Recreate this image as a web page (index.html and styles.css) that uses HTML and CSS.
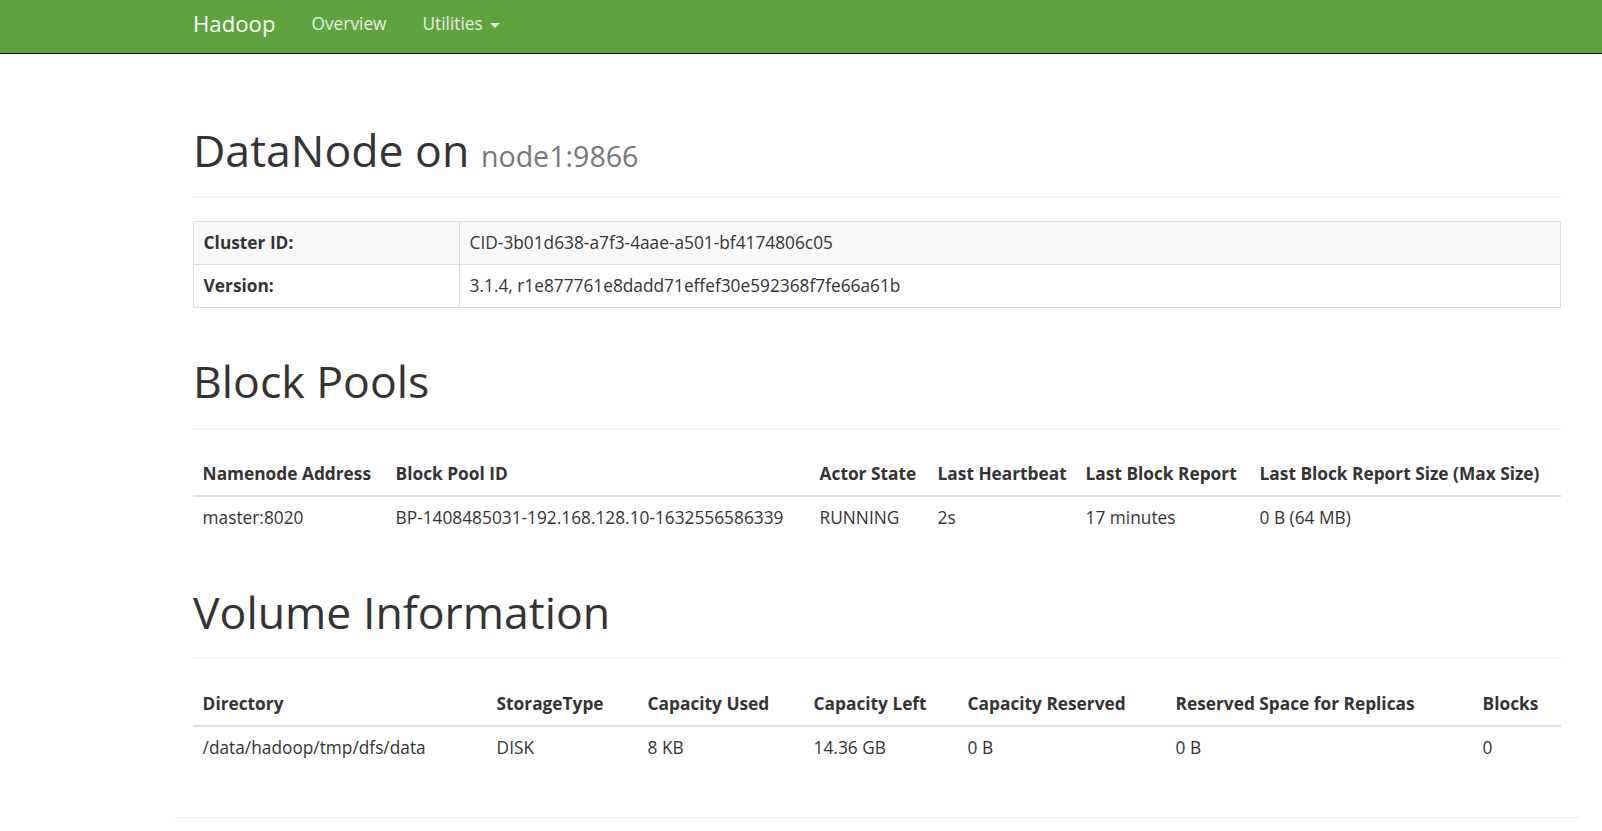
FILE: index.html
```html
<!DOCTYPE html>
<html>
<head>
<meta charset="utf-8">
<title>DataNode Information</title>
<link rel="stylesheet" href="styles.css">
</head>
<body>
<header class="navbar">
  <div class="navbar-inner">
    <div class="navbar-brand">Hadoop</div>
    <ul class="nav">
      <li><a href="#tab-overview">Overview</a></li>
      <li><a href="#">Utilities <b class="caret"></b></a></li>
    </ul>
  </div>
</header>

<main class="container">
  <div class="page-header first">
    <h1>DataNode on <small>node1:9866</small></h1>
  </div>
  <table class="table table-bordered info">
    <tbody>
      <tr class="striped"><th class="label-col">Cluster ID:</th><td>CID-3b01d638-a7f3-4aae-a501-bf4174806c05</td></tr>
      <tr><th class="label-col">Version:</th><td>3.1.4, r1e877761e8dadd71effef30e592368f7fe66a61b</td></tr>
    </tbody>
  </table>

  <div class="page-header">
    <h1>Block Pools</h1>
  </div>
  <table class="table">
    <thead>
      <tr>
        <th class="bp-1">Namenode Address</th>
        <th class="bp-2">Block Pool ID</th>
        <th class="bp-3">Actor State</th>
        <th class="bp-4">Last Heartbeat</th>
        <th class="bp-5">Last Block Report</th>
        <th class="bp-6">Last Block Report Size (Max Size)</th>
      </tr>
    </thead>
    <tbody>
      <tr>
        <td>master:8020</td>
        <td>BP-1408485031-192.168.128.10-1632556586339</td>
        <td>RUNNING</td>
        <td>2s</td>
        <td>17 minutes</td>
        <td>0 B (64 MB)</td>
      </tr>
    </tbody>
  </table>

  <div class="page-header">
    <h1>Volume Information</h1>
  </div>
  <table class="table">
    <thead>
      <tr>
        <th class="vi-1">Directory</th>
        <th class="vi-2">StorageType</th>
        <th class="vi-3">Capacity Used</th>
        <th class="vi-4">Capacity Left</th>
        <th class="vi-5">Capacity Reserved</th>
        <th class="vi-6">Reserved Space for Replicas</th>
        <th class="vi-7">Blocks</th>
      </tr>
    </thead>
    <tbody>
      <tr>
        <td>/data/hadoop/tmp/dfs/data</td>
        <td>DISK</td>
        <td>8 KB</td>
        <td>14.36 GB</td>
        <td>0 B</td>
        <td>0 B</td>
        <td>0</td>
      </tr>
    </tbody>
  </table>

  <div class="row">
    <hr class="footer-rule">
  </div>
</main>
</body>
</html>
```

FILE: styles.css
```css
* {
  box-sizing: border-box;
}

html, body {
  margin: 0;
  padding: 0;
  background: #fff;
}

body {
  font-family: "Open Sans", "Noto Sans", "Liberation Sans", sans-serif;
  font-size: 17.3px;
  line-height: 24px;
  color: #333;
}

/* Navbar */
.navbar {
  background-color: #5fa33e;
  height: 54px;
  border-bottom: 1px solid #080808;
}

.navbar-inner {
  width: 1404px;
  margin-left: 175px;
  padding: 0 18px;
  display: flex;
  align-items: flex-start;
  height: 53px;
}

.navbar-brand {
  margin-left: -18px;
  padding: 0 18px;
  font-size: 22.2px;
  line-height: 47px;
  color: #fff;
}

.nav {
  list-style: none;
  margin: 0;
  padding: 0;
  display: flex;
}

.nav a {
  display: block;
  padding: 0 18px;
  line-height: 47px;
  color: #e8ede6;
  text-decoration: none;
}

.caret {
  display: inline-block;
  width: 0;
  height: 0;
  margin-left: 3px;
  vertical-align: middle;
  border-top: 5px solid #e8ede6;
  border-left: 5px solid transparent;
  border-right: 5px solid transparent;
}

/* Main container */
.container {
  display: block;
  width: 1404px;
  margin-left: 175px;
  padding: 0 18px;
}

.page-header {
  margin: 49px 0 24px;
  padding-bottom: 22.8px;
  border-bottom: 1px solid #eee;
}

.page-header.first {
  margin-top: 72px;
}

.page-header h1 {
  margin: 0;
  font-size: 44.6px;
  font-weight: 400;
  line-height: 47.5px;
  color: #333;
}

.page-header h1 small {
  font-size: 28.6px;
  font-weight: 400;
  line-height: 1;
  color: #777;
}

/* Tables */
.table {
  width: 100%;
  border-collapse: collapse;
  border-spacing: 0;
  table-layout: fixed;
  margin: 0;
}

.table th,
.table td {
  padding: 9px 9.6px;
  line-height: 24px;
  text-align: left;
  vertical-align: top;
  white-space: nowrap;
}

.table th {
  font-weight: 700;
}

.table thead th {
  border-bottom: 2px solid #ddd;
  vertical-align: bottom;
}

.table tbody td {
  border-top: 1px solid #ddd;
}

.table-bordered {
  border: 1px solid #ddd;
}

.table-bordered th,
.table-bordered td {
  border: 1px solid #ddd;
}

.table-bordered tr.striped th,
.table-bordered tr.striped td {
  background-color: #f9f9f9;
}

.info .label-col {
  width: 266px;
}

.bp-1 { width: 193px; }
.bp-2 { width: 424px; }
.bp-3 { width: 118px; }
.bp-4 { width: 148px; }
.bp-5 { width: 174px; }
.bp-6 { width: 311px; }

.vi-1 { width: 294px; }
.vi-2 { width: 151px; }
.vi-3 { width: 166px; }
.vi-4 { width: 154px; }
.vi-5 { width: 208px; }
.vi-6 { width: 307px; }
.vi-7 { width: 88px; }

/* Footer */
.row {
  margin: 0 -18px;
}

.footer-rule {
  margin: 48px 0 24px;
  border: 0;
  border-top: 1px solid #eee;
  height: 0;
}
```
